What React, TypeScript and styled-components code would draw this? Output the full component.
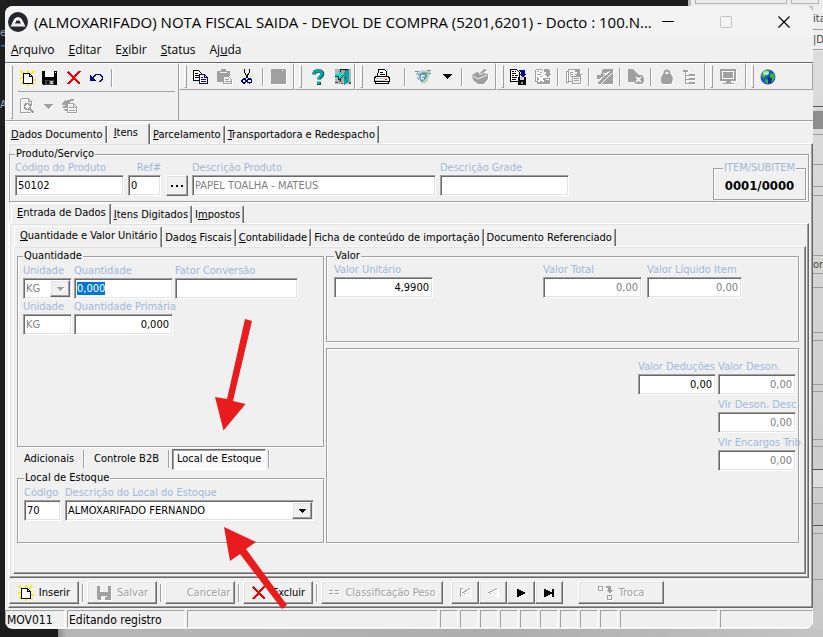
import React, { useEffect, useRef } from "react";
import styled, { createGlobalStyle, css } from "styled-components";

/* ---------- palette and fonts ---------- */

const face = "#f0f0f0";
const shadow = "#a0a0a0";
const dark = "#696969";
const light = "#e3e3e3";
const captionBlue = "#9fb9d9";
const uiFont = '"DejaVu Sans Condensed", "DejaVu Sans", sans-serif';
const systemFont = '"Open Sans", "Noto Sans", sans-serif';

const GlobalStyle = createGlobalStyle`
  *, *::before, *::after { box-sizing: border-box; }
  body { margin: 0; background: #1e1e1e; font: 11px/14px ${uiFont}; color: #000; }
  button, input, select { font: inherit; color: inherit; margin: 0; }
  u { text-underline-offset: 1px; }
`;

const sunken = css`
  border: 1px solid;
  border-color: ${shadow} #fff #fff ${shadow};
  box-shadow: inset 1px 1px 0 ${dark}, inset -1px -1px 0 ${light};
`;

const raised = css`
  border: 1px solid;
  border-color: #fff ${dark} ${dark} #fff;
  box-shadow: inset -1px -1px 0 ${shadow}, inset 1px 1px 0 ${light};
`;

/* ---------- desktop behind the window ---------- */

const Desktop = styled.div`
  position: relative;
  display: grid;
  grid-template: 6px 1fr 8px / 5px minmax(0, 1fr) 10px;
  min-height: 100vh;
  background: #1e1e1e;
  overflow: hidden;
`;

const TopStrip = styled.div`
  grid-column: 1 / -1;
  display: flex;
  justify-content: flex-end;
`;

const TopPeek = styled.div`
  width: 135px;
  background: #ececec;
  border-left: 3px solid #bdbdbd;
  display: flex;
  gap: 4px;
  padding: 0 4px;
`;

const PeekCell = styled.div<{ $grow?: boolean }>`
  flex: ${(p) => (p.$grow ? 1 : "0 0 28px")};
  height: 4px;
  border: 1px solid #b5b5b5;
  border-top: 0;
`;

const LeftStrip = styled.div`
  overflow: hidden;
  display: flex;
  flex-direction: column;
  padding-top: 20px;
`;

const LeftText = styled.span<{ $gap: number; $tone?: string }>`
  margin-top: ${(p) => p.$gap}px;
  color: ${(p) => p.$tone ?? "#9aa3b5"};
`;

const RightStrip = styled.div`
  overflow: hidden;
  display: flex;
  flex-direction: column;
  background: linear-gradient(#efefef, #efefef 44px, #dcdcdc 46px, #cfcfcf 400px, #c8c8c8);
  color: #444;
`;

const RightCell = styled.div<{ $h: number; $bg?: string; $line?: string }>`
  flex: 0 0 ${(p) => p.$h}px;
  overflow: hidden;
  white-space: nowrap;
  display: flex;
  align-items: center;
  background: ${(p) => p.$bg ?? "transparent"};
  border-bottom: 1px solid ${(p) => p.$line ?? "#9b9b9b"};
`;

const BottomStrip = styled.div`
  grid-column: 1 / -1;
  background: linear-gradient(90deg, #1c1c1c 58px, #8a8a8a 58px, #b6b6b6 66px, #adadad 60%, #c4c4c4);
`;

/* ---------- window ---------- */

const Backing = styled.div`
  display: flex;
  flex-direction: column;
  min-width: 0;
  background: linear-gradient(#1e1e1e, #1e1e1e) left / 50% 100% no-repeat, #c4c4c4;
`;

const Window = styled.main`
  flex: 1;
  display: flex;
  flex-direction: column;
  min-width: 0;
  background: ${face};
  border-radius: 8px;
  overflow: hidden;
`;

const TitleBar = styled.header`
  display: flex;
  align-items: center;
  height: 31px;
  padding-left: 3px;
  background: #f3f3f3;
`;

const Title = styled.h1`
  flex: 1;
  min-width: 0;
  margin: 0 0 0 6px;
  font: 400 15px/20px ${systemFont};
  white-space: nowrap;
`;

const CaptionButton = styled.button`
  width: 58px;
  height: 30px;
  border: 0;
  background: none;
  padding: 0;
  display: grid;
  place-items: center;
`;

const MenuBar = styled.nav`
  display: flex;
  align-items: center;
  gap: 14px;
  height: 25px;
  padding-left: 6px;
  font: 12px/16px ${systemFont};
`;

const MenuItem = styled.button`
  border: 0;
  background: none;
  padding: 0;
`;

/* ---------- toolbars ---------- */

const ToolArea = styled.div`
  display: grid;
  grid-template-columns: 174px minmax(0, 1fr);
  height: 60px;
  border-top: 1px solid ${dark};
  border-bottom: 1px solid #fff;
  box-shadow: inset 0 -1px 0 ${shadow};
`;

const Band = styled.div<{ $stretch?: boolean }>`
  display: flex;
  flex: ${(p) => (p.$stretch ? "1 0 auto" : "0 0 auto")};
  align-items: center;
  height: 27px;
  padding: 0 2px 0 4px;
  border: 1px solid;
  border-color: #fff ${shadow} ${shadow} #fff;
`;

const TallBand = styled(Band)`
  height: 58px;
  align-items: stretch;
  padding: 0 3px 0 4px;
`;

const Grip = styled.span`
  width: 3px;
  align-self: stretch;
  margin: 1px 0;
  border: 1px solid;
  border-color: #fff ${shadow} ${shadow} #fff;
`;

const BandRows = styled.div`
  flex: 1;
  display: grid;
  grid-template-rows: 28px 1fr;
  margin-left: 5px;
`;

const ToolRow = styled.div<{ $ruled?: boolean }>`
  display: flex;
  align-items: center;
  ${(p) => p.$ruled && `border-bottom: 1px solid ${shadow};`}
`;

const BandRow = styled.div`
  display: flex;
  min-width: 0;
`;

const ToolButton = styled.button<{ $w?: number }>`
  width: ${(p) => p.$w ?? 24}px;
  height: 22px;
  padding: 0;
  border: 0;
  background: none;
  display: grid;
  place-items: center;
`;

const Rule = styled.span<{ $side?: number }>`
  width: 2px;
  height: 18px;
  margin: 0 ${(p) => p.$side ?? 3}px;
  border-left: 1px solid ${shadow};
  border-right: 1px solid #fff;
`;

const Glyph = styled.svg<{ $off?: boolean }>`
  display: block;
  flex: none;
  ${(p) => p.$off && "filter: drop-shadow(1px 1px 0 #fff);"}
`;

/* ---------- tabs ---------- */

const TabStrip = styled.div<{ $inset: number; $above: number }>`
  display: flex;
  align-items: flex-end;
  height: 20px;
  margin-top: ${(p) => p.$above}px;
  padding-left: ${(p) => p.$inset}px;
`;

const Tab = styled.button<{ $on?: boolean; $wide?: boolean }>`
  position: relative;
  z-index: ${(p) => (p.$on ? 1 : 0)};
  height: ${(p) => (p.$on ? 21 : 18)}px;
  margin-bottom: ${(p) => (p.$on ? -1 : 0)}px;
  padding: ${(p) => (p.$on ? "0 4px 2px 5px" : "0 3px 0 2px")};
  ${(p) => p.$wide && "padding: 0 11px 2px 6px;"}
  white-space: nowrap;
  text-align: left;
  background: ${face};
  border: 1px solid;
  border-color: #fff ${dark} transparent #fff;
  border-bottom: 0;
  border-radius: 2px 2px 0 0;
  box-shadow: inset -1px 0 0 ${shadow};
`;

const Page = styled.section<{ $pad: string; $left?: number }>`
  flex: 1;
  display: flex;
  flex-direction: column;
  min-width: 0;
  margin-left: ${(p) => p.$left ?? 0}px;
  padding: ${(p) => p.$pad};
  border: 1px solid;
  border-color: #fff ${dark} ${dark} #fff;
  box-shadow: inset -1px -1px 0 ${shadow}, inset 1px 1px 0 ${light};
`;

/* ---------- group boxes and fields ---------- */

const Group = styled.fieldset<{ $grow?: boolean; $h?: number; $left?: number }>`
  min-width: 0;
  margin: 0;
  padding: 0 2px 0 ${(p) => p.$left ?? 5}px;
  ${(p) => p.$grow && "flex: 1;"}
  ${(p) => p.$h && `flex: none; min-height: ${p.$h}px;`}
  border: 1px solid ${shadow};
  box-shadow: 1px 1px 0 #fff, inset 1px 1px 0 #fff;
`;

const Legend = styled.legend`
  padding: 0 1px;
  line-height: 14px;
  background: ${face};
`;

const ItemBox = styled.fieldset`
  width: 93px;
  height: 39px;
  margin: 0 0 1px auto;
  padding: 1px 0 0;
  border: 1px solid ${shadow};
  box-shadow: 1px 1px 0 #fff, inset 1px 1px 0 #fff;
  text-align: center;
  font-weight: 700;
  font-size: 13px;
  line-height: 20px;

  legend {
    margin: 0 auto;
    padding: 0 1px;
    font-weight: 400;
    font-size: 11px;
    line-height: 14px;
    color: ${captionBlue};
    background: ${face};
  }
`;

const FieldRow = styled.div<{ $gap?: number; $above?: number; $end?: boolean; $top?: boolean }>`
  display: flex;
  align-items: ${(p) => (p.$top ? "flex-start" : "flex-end")};
  justify-content: ${(p) => (p.$end ? "flex-end" : "flex-start")};
  gap: ${(p) => p.$gap ?? 2}px;
  margin-top: ${(p) => p.$above ?? 0}px;
`;

const FieldBox = styled.label<{ $w: number; $right?: boolean; $push?: boolean; $after?: number }>`
  display: flex;
  flex-direction: column;
  flex: 0 1 ${(p) => p.$w}px;
  min-width: 0;
  color: ${captionBlue};
  white-space: nowrap;
  text-align: ${(p) => (p.$right ? "right" : "left")};
  ${(p) => p.$push && "margin-left: auto;"}
  ${(p) => p.$after && `margin-right: ${p.$after}px;`}
`;

const TextInput = styled.input<{ $numeric?: boolean; $muted?: boolean }>`
  width: 100%;
  height: 21px;
  padding: 0 3px 1px 2px;
  ${sunken}
  border-radius: 0;
  outline: 0;
  background: #fff;
  color: ${(p) => (p.$muted ? "#808080" : "#000")};
  text-align: ${(p) => (p.$numeric ? "right" : "left")};

  &::selection { background: #0078d7; color: #fff; }
`;

const SelectFrame = styled.span`
  display: flex;
  height: 21px;
  padding: 1px;
  background: #fff;
  ${sunken}
`;

const BareSelect = styled.select<{ $muted?: boolean }>`
  appearance: none;
  flex: 1;
  min-width: 0;
  border: 0;
  padding: 0 0 0 1px;
  background: transparent;
  outline: 0;
  opacity: 1;
  color: ${(p) => (p.$muted ? "#808080" : "#000")};
`;

const DropArrow = styled.span`
  flex: 0 0 20px;
  display: grid;
  place-items: center;
  background: ${face};
  ${raised}
`;

const PushButton = styled.button<{ $w: number; $after?: number }>`
  display: flex;
  align-items: center;
  justify-content: center;
  gap: 5px;
  flex: 0 0 ${(p) => p.$w}px;
  height: 23px;
  margin-right: ${(p) => p.$after ?? 0}px;
  padding: 0;
  background: ${face};
  white-space: nowrap;
  ${raised}

  &:disabled { color: ${shadow}; text-shadow: 1px 1px 0 #fff; }
`;

const PickButton = styled.button`
  flex: 0 0 22px;
  height: 21px;
  margin: 14px 0 0 1px;
  padding: 0;
  display: grid;
  place-items: center;
  background: ${face};
  ${raised}
`;

/* ---------- item page ---------- */

const Columns = styled.div`
  flex: 1;
  display: grid;
  grid-template-columns: 307px minmax(0, 1fr);
  gap: 2px;
`;

const Column = styled.div<{ $gap?: number }>`
  display: flex;
  flex-direction: column;
  min-width: 0;
  gap: ${(p) => p.$gap ?? 0}px;
`;

const SubTabs = styled.div`
  display: flex;
  align-items: center;
  height: 24px;
`;

const SubTab = styled.button<{ $on?: boolean }>`
  height: 21px;
  border: 0;
  padding: 0 7px;
  background: none;
  white-space: nowrap;
  ${(p) =>
    p.$on &&
    css`
      padding: 0 4px;
      background: #fafafa;
      border: 1px solid;
      border-color: ${dark} #fff #fff ${dark};
      box-shadow: inset 1px 1px 0 ${shadow};
    `}
`;

const ButtonRow = styled.div`
  display: flex;
  align-items: center;
  height: 29px;
`;

/* ---------- status bar ---------- */

const StatusBar = styled.footer`
  display: flex;
  gap: 2px;
  height: 21px;
  padding: 2px 0 1px;
  font-size: 12px;
`;

const StatusCell = styled.div<{ $w?: number; $grow?: boolean }>`
  flex: ${(p) => (p.$grow ? "1 1 0" : `0 0 ${p.$w}px`)};
  min-width: 0;
  padding-left: 1px;
  line-height: 18px;
  white-space: nowrap;
  border: 1px solid;
  border-color: ${shadow} #fff #fff ${shadow};
`;

const Arrow = styled.svg<{ $x: number; $y: number }>`
  position: absolute;
  left: ${(p) => p.$x}px;
  top: ${(p) => p.$y}px;
  z-index: 5;
  pointer-events: none;
  fill: #e81c1c;
`;

/* ---------- icons ---------- */

type IconProps = { children?: React.ReactNode; off?: boolean; smooth?: boolean; w?: number; h?: number };

const Icon = ({ children, off, smooth, w = 16, h = 16 }: IconProps) => (
  <Glyph
    width={w}
    height={h}
    viewBox={`0 0 ${w} ${h}`}
    fill="none"
    shapeRendering={smooth ? "auto" : "crispEdges"}
    $off={off}
    aria-hidden="true"
  >
    {children}
  </Glyph>
);

const LogoIcon = () => (
  <Icon w={20} h={20} smooth>
    <circle cx="10" cy="10" r="10" fill="#26262e" />
    <path d="M2.500 14.500L6 7.500Q7.300 5 10 5t4 2.500l3.500 7z" fill="#fff" />
    <path d="M7 11.500L8.500 8.500h3L13 11.500z" fill="#26262e" />
    <path d="M1 12.500h18v1H1z" fill="#26262e" opacity=".2" />
  </Icon>
);

const NewIcon = () => (
  <Icon>
    <path d="M1 1l3 3M7.500 0v3M14 1l-3 3M0 8h4M1 14l3-3M13 9.500h3M14.500 15l-2-2M8 16v-2" stroke="#ffee00" strokeWidth="2" />
    <path d="M3.500 3.500h6l3 3v7h-9z" fill="#fff" stroke="#000" />
    <path d="M9.500 3.500v3h3" stroke="#000" />
  </Icon>
);

const SaveIcon = () => (
  <Icon>
    <path d="M0 1h15v14H1l-1-1z" fill="#000" />
    <path d="M3 1h9v6H3z" fill="#fff" />
    <path d="M13 2h1v1h-1z" fill="#fff" />
    <path d="M3 10h9v5H3z" fill="#444" />
    <path d="M5 11h2v3H5z" fill="#000" />
    <path d="M8 11h3v3H8z" fill="#bbb" />
  </Icon>
);

const SaveOffIcon = () => (
  <Icon off>
    <path d="M1 1h3v6h8V1h3v14H2l-1-1z" fill={shadow} />
    <path d="M5 11h6v4H5z" fill={face} />
    <path d="M9 12h2v3H9z" fill={shadow} />
  </Icon>
);

const CrossIcon = () => (
  <Icon>
    <path d="M2 2l12 12M14 1L2 14" stroke="#f00000" strokeWidth="2" />
  </Icon>
);

const UndoIcon = () => (
  <Icon>
    <path d="M1 5v6h6z" fill="#000080" />
    <path d="M3 8.500L6 5.500l1-1h4l2 2v3l-2 2h-1" stroke="#000080" />
  </Icon>
);

const PreviewIcon = () => (
  <Icon off>
    <path d="M1.500 .5h8l3 3v4M1.500 .5v14h10M9.500 .5v3h3" stroke={shadow} />
    <circle cx="8.500" cy="8.500" r="3" stroke={shadow} strokeWidth="1.500" />
    <path d="M10 10l5 5" stroke={shadow} strokeWidth="2" />
  </Icon>
);

const TriangleIcon = ({ off }: { off?: boolean }) => (
  <Icon w={9} h={5} off={off}>
    <path d="M0 0h9v1H8v1H7v1H6v1H5v1H4V4H3V3H2V2H1V1H0z" fill={off ? shadow : "#000"} />
  </Icon>
);

const SmallTriangle = ({ off }: { off?: boolean }) => (
  <Icon w={7} h={4} off={off}>
    <path d="M0 0h7v1H6v1H5v1H4v1H3V3H2V2H1V1H0z" fill={off ? shadow : "#000"} />
  </Icon>
);

const RefreshPageIcon = () => (
  <Icon off>
    <path d="M5.500 5.500h6l3 3v6h-9z" stroke={shadow} />
    <path d="M7 9h5v1H7zM7 12h6v1H7zM11 6h1v3h3v1h-4z" fill={shadow} />
    <path d="M0 6l4-5v2l5-2v3L5 6l1 2-6-1zM1 8h4v2H1zM8 1h4v2H8zM2 11h3v2H3z" fill={shadow} />
  </Icon>
);

const CopyIcon = () => (
  <Icon>
    <path d="M.5 1.500h5l3 3v7h-8z" fill="#fff" stroke="#000" />
    <path d="M2 4h3v1H2zM2 6h4v1H2zM2 8h4v1H2z" fill="#000" />
    <path d="M6.500 5.500h5l3 3v6h-8z" fill="#fff" stroke="#000080" />
    <path d="M11.500 5.500v3h3M8 8.500h2M8 10.500h5M8 12.500h5" stroke="#000080" />
  </Icon>
);

const PasteIcon = () => (
  <Icon off>
    <path d="M0 2h4V0h5v2h4v5H6v6H0z" fill={shadow} />
    <path d="M3 3h7v1H3z" fill={face} />
    <path d="M6.500 7.500h5l3 3v4h-8z" fill={face} stroke={shadow} />
    <path d="M8 10h4v1H8zM8 12h6v1H8z" fill={shadow} />
  </Icon>
);

const CutIcon = () => (
  <Icon>
    <path d="M5.500 0v3l4 7M10.500 0v3l-4 7" stroke="#000" />
    <path d="M7 6h2v3H7z" fill="#000" />
    <circle cx="5" cy="12" r="2" stroke="#000080" strokeWidth="1.300" />
    <circle cx="10.500" cy="12" r="2" stroke="#000080" strokeWidth="1.300" />
  </Icon>
);

const BlockIcon = () => (
  <Icon off>
    <path d="M0 0h15v15H0z" fill={shadow} />
    <path d="M11 1h1v1h-1z" fill="#fff" />
  </Icon>
);

const HelpIcon = () => (
  <Icon smooth>
    <path d="M4 5.500C4 2.500 6 2 8.200 2c2.600 0 4.300 1.200 4.300 3.200 0 2.600-3.500 2.800-3.500 5.300" stroke="#004d55" strokeWidth="3.500" />
    <path d="M3.500 5C4 2.500 6 1.800 8 1.800c2.300 0 4 1 4 3 0 2.500-3.500 2.700-3.500 5.200" stroke="#00a8b0" strokeWidth="2.500" />
    <path d="M7 13h4v3H7z" fill="#004d55" />
    <path d="M7 12.500h3V15H7z" fill="#00a8b0" />
  </Icon>
);

const ExitIcon = () => (
  <Icon>
    <path d="M0 0h16v15H0z" fill="#b4b4b4" />
    <path d="M5 0h9v12H5z" fill="#1c1c1c" />
    <path d="M6 1h4v11H6z" fill="#a8a8a8" />
    <path d="M9 3l5-3v13l-5 3z" fill="#0aa0a0" />
    <path d="M10 8h1v2h-1z" fill="#002b2b" />
    <path d="M0 5h4V2l5 4-5 4V7H0z" fill="#00dede" />
    <path d="M0 7h4v3l5-4v1l-5 4H3V8H0z" fill="#003a3a" />
    <path d="M0 13h3v1H0zM4 12h2v1H4zM6 14h2v1H6zM14 13h2v2h-2z" fill="#555" />
  </Icon>
);

const PrinterIcon = () => (
  <Icon w={18}>
    <path d="M4.500 7.500l1-7h6l2 2v5z" fill="#fff" stroke="#000" />
    <path d="M7 3h3v1H7zM7 5h5v1H7z" fill="#000" />
    <path d="M1.500 8.500l2-1h11l2 1v4h-15z" fill="#fff" stroke="#000" />
    <path d="M2 9h14v1H2zM2 11h10v1H2z" fill="#ccc" />
    <path d="M12 10h2v1h-2z" fill="#e00" />
    <path d="M2.500 12.500h13v2h-13z" fill="#fff" stroke="#000" />
  </Icon>
);

const MapIcon = () => (
  <Icon smooth>
    <path d="M2 3l6-2 7 1-1 7-3 5-4 1-3-5z" fill="#b7d7cf" />
    <path d="M4 6c3-4 7-3 8-1s-2 7-6 8z" fill="#5b93b8" />
    <path d="M6 6h4v1.500H7.500V9H9v1.500H6z" fill="#e8f1ee" />
    <path d="M8 3l6 1-3 2z" fill="#74a85d" />
    <path d="M0 2.500h4M1 5h3M12 1.500h4M14 4.500h2M2 8l2 3" stroke="#6f8f99" />
    <path d="M10 11l3 1-3 2z" fill="#c5cf9a" />
  </Icon>
);

const CrateIcon = () => (
  <Icon w={18} off smooth>
    <path d="M1 6l5-3 3 1 4-4 3 1-4 3 5 1v5l-4 5H7l-5-4z" fill={shadow} />
    <path d="M2 7l5 3 9-4M8 4l2 1.500L12 4" stroke={face} />
  </Icon>
);

const SaveDocIcon = () => (
  <Icon w={18}>
    <path d="M1.500 .5h6l3 3v9h-9z" fill="#fff" stroke="#000" />
    <path d="M3 2h2v1H3zM6 2h1v1H6zM3 4h4v1H3zM3 6h2v1H3zM6 6h3v1H6zM3 8h5v1H3zM3 10h4v1H3z" fill="#000" />
    <path d="M10 1h5l1 1v3h1l-3 4-4-4h2V4l-2-2z" fill="#000090" />
    <path d="M9 8h8v8H9z" fill="#000" />
    <path d="M11 8h4v3h-4z" fill="#ccc" />
    <path d="M12 13h2v2h-2z" fill="#999" />
  </Icon>
);

const DocCrossIcon = () => (
  <Icon w={18} off>
    <path d="M1.500 .5h6l2 2M1.500 .5v12h3" stroke={shadow} />
    <path d="M3 2h2v1H3zM6 3h2v1H6zM3 5h4v1H3z" fill={shadow} />
    <path d="M10 0h4l2 2v3h1l-3 4-4-4h2V3h-2z" fill={shadow} />
    <path d="M3 7h6v2h7v6H3z" fill={shadow} />
    <path d="M4 7l6 6M10 7l-6 6" stroke="#fff" strokeWidth="1.500" />
    <path d="M12 10h3v1h-3z" fill="#fff" />
  </Icon>
);

const DocsIcon = () => (
  <Icon w={18} off>
    <path d="M1.500 2.500h2v11h-2zM3.500 .5h7l2 2v10h-9z" stroke={shadow} />
    <path d="M5 3h3v1H5zM5 5h3v1H5zM5 7h3v1H5z" fill={shadow} />
    <path d="M10 0h4l1 1v4h2l-4 4-3-4h2V3h-2z" fill={shadow} />
    <path d="M7.500 7.500h8v7h-8z" fill={face} stroke={shadow} />
    <path d="M9 9h5v1H9zM9 11h5v1H9z" fill={shadow} />
  </Icon>
);

const SplitIcon = () => (
  <Icon off>
    <path d="M6 0h10v15H1v-2l5-5-2 2H0V6h4z" fill={shadow} />
    <path d="M1 12L13 2M6 4h4M4 15L15 4" stroke="#fff" />
  </Icon>
);

const FolderCrossIcon = () => (
  <Icon w={18} off smooth>
    <path d="M1 0h5l6 6h3l2 3v4l-2 2H9l-2-2H1z" fill={shadow} />
    <path d="M9 8l5 5M14 8l-5 5" stroke="#fff" strokeWidth="1.500" />
  </Icon>
);

const LockIcon = () => (
  <Icon off smooth>
    <path d="M5.500 7V4a2.500 2.500 0 015 0v3" stroke={shadow} strokeWidth="2" />
    <path d="M4 5h8l2 4-1 5-1 1H4l-2-2V9z" fill={shadow} />
  </Icon>
);

const TreeIcon = () => (
  <Icon off>
    <path d="M1 1h5v2H1z" fill={shadow} />
    <path d="M3.500 3v12M4 6.500h3M4 10.500h3M4 14.500h3" stroke={shadow} />
    <path d="M7 5h6v2H7zM7 9h6v2H7zM7 13h6v2H7z" fill={shadow} />
  </Icon>
);

const MonitorIcon = () => (
  <Icon off>
    <path d="M0 0h16v12H0z" fill={shadow} />
    <path d="M2.500 2.500h11v7h-11z" stroke="#fff" />
    <path d="M6 12h5v2h3v1H3v-1h3z" fill={shadow} />
  </Icon>
);

const GlobeIcon = () => (
  <Icon smooth>
    <circle cx="8" cy="8" r="7.500" fill="#1559c4" />
    <path d="M3 3c3-3 6-3 7-1L8 5 6 7 4 9 1 7zM10 5l4-1 1 5-3 4-2-3zM5 10l3 1v4l-3-2z" fill="#3fae3b" />
    <path d="M8 8l4 1-1 5-3 1z" fill="#0b2f86" />
    <ellipse cx="6" cy="4" rx="3" ry="2" fill="#d8f5ff" opacity=".75" />
  </Icon>
);

const ListIcon = () => (
  <Icon w={12} h={8} off>
    <path d="M1 1h4v1H1zM7 1h4v1H7zM1 4h4v1H1zM7 4h4v1H7z" fill={shadow} />
  </Icon>
);

const SwapIcon = () => (
  <Icon off>
    <path d="M.5 1.500h4v4h-4zM9.500 10.500h4v4h-4z" stroke={shadow} />
    <path d="M8 1h5v4h2l-3 4-4-4h2V3H8z" fill={shadow} />
  </Icon>
);

const FirstIcon = () => (
  <Icon w={12} h={9} off>
    <path d="M4 .5H1.500V9M11 .5L4 4.500l2 1" stroke={shadow} />
    <path d="M6 6l5 2.500V1" stroke="#fff" />
  </Icon>
);

const PriorIcon = () => (
  <Icon w={12} h={9} off>
    <path d="M10 .5L2 4.500l2 1" stroke={shadow} />
    <path d="M4 6l6 2.500V1" stroke="#fff" />
  </Icon>
);

const NextIcon = () => (
  <Icon w={8} h={8}>
    <path d="M0 0h2v1h2v1h2v1h2v2H6v1H4v1H2v1H0z" fill="#000" />
  </Icon>
);

const LastIcon = () => (
  <Icon w={11} h={8}>
    <path d="M0 0h2v1h2v1h2v1h2v2H6v1H4v1H2v1H0zM8 0h2v8H8z" fill="#000" />
  </Icon>
);

/* ---------- small helpers ---------- */

/** Renders a caption in which "&" marks the letter to underline. */
const Caption = ({ text }: { text: string }) => {
  const at = text.indexOf("&");
  if (at < 0) return <>{text}</>;
  return (
    <>
      {text.slice(0, at)}
      <u>{text[at + 1]}</u>
      {text.slice(at + 2)}
    </>
  );
};

type TabsProps = { items: string[]; active: number; inset: number; above: number; wide?: boolean };

const Tabs = ({ items, active, inset, above, wide }: TabsProps) => (
  <TabStrip role="tablist" $inset={inset} $above={above}>
    {items.map((text, i) => (
      <Tab key={text} role="tab" type="button" aria-selected={i === active} $on={i === active} $wide={wide && i === active}>
        <Caption text={text} />
      </Tab>
    ))}
  </TabStrip>
);

type FieldProps = {
  label: string;
  w: number;
  value?: string;
  numeric?: boolean;
  muted?: boolean;
  right?: boolean;
  push?: boolean;
  after?: number;
  selected?: boolean;
};

const Field = ({ label, w, value = "", numeric, muted, right, push, after, selected }: FieldProps) => {
  const input = useRef<HTMLInputElement>(null);
  useEffect(() => {
    if (!selected || !input.current) return;
    input.current.focus();
    input.current.select();
  }, [selected]);
  return (
    <FieldBox $w={w} $right={right} $push={push} $after={after}>
      {label}
      <TextInput ref={input} defaultValue={value} readOnly={muted} $numeric={numeric} $muted={muted} />
    </FieldBox>
  );
};

const Tool = ({ name, w, off, children }: { name: string; w?: number; off?: boolean; children: React.ReactNode }) => (
  <ToolButton type="button" aria-label={name} disabled={off} $w={w}>
    {children}
  </ToolButton>
);

const menus = ["&Arquivo", "&Editar", "E&xibir", "&Status", "Aj&uda"];

const rightCells: { h: number; text?: string; bg?: string; line?: string }[] = [
  { h: 6, line: "#efefef" },
  { h: 15, text: "ita", line: "#efefef" },
  { h: 3 },
  { h: 20, text: "|D" },
  { h: 57, line: "#555" },
  { h: 4, line: "#cfcfcf" },
  { h: 18, bg: "#8e8e8e", line: "#8e8e8e" },
  { h: 6 },
  { h: 30 },
  { h: 22 },
  { h: 9 },
  { h: 60 },
  { h: 18, text: "om" },
  { h: 14 },
  { h: 45 },
  { h: 8 },
  { h: 44 },
  { h: 7 },
  { h: 48 },
  { h: 7 },
  { h: 23, line: "#555" },
  { h: 18, bg: "#dedede" },
  { h: 16 },
  { h: 22, bg: "#c6c6c6", line: "#555" },
  { h: 8 },
  { h: 46 },
];

/* ---------- page ---------- */

export default function App() {
  return (
    <Desktop>
      <GlobalStyle />
      <TopStrip aria-hidden="true">
        <TopPeek>
          <PeekCell $grow />
          <PeekCell />
        </TopPeek>
      </TopStrip>

      <LeftStrip aria-hidden="true">
        <LeftText $gap={0}>e</LeftText>
        <LeftText $gap={0} $tone="#3f86d8">~</LeftText>
        <LeftText $gap={44}>A</LeftText>
      </LeftStrip>

      <Backing>
        <Window>
          <TitleBar>
            <LogoIcon />
            <Title>(ALMOXARIFADO) NOTA FISCAL SAIDA - DEVOL DE COMPRA (5201,6201) - Docto : 100.N...</Title>
            <CaptionButton type="button" aria-label="Minimizar">
              <Icon w={12} h={12}><path d="M0 5.500h12" stroke="#000" /></Icon>
            </CaptionButton>
            <CaptionButton type="button" aria-label="Maximizar" disabled>
              <Icon w={12} h={12} smooth><rect x=".5" y=".5" width="11" height="11" rx="1" stroke="#c4c4c4" /></Icon>
            </CaptionButton>
            <CaptionButton type="button" aria-label="Fechar">
              <Icon w={12} h={12} smooth><path d="M.5 .5l11 11M11.500 .5l-11 11" stroke="#000" strokeWidth="1.200" /></Icon>
            </CaptionButton>
          </TitleBar>

          <MenuBar>
            {menus.map((m) => (
              <MenuItem key={m} type="button"><Caption text={m} /></MenuItem>
            ))}
          </MenuBar>

          <ToolArea>
            <TallBand>
              <Grip />
              <BandRows>
                <ToolRow $ruled>
                  <Tool name="Novo" w={20}><NewIcon /></Tool>
                  <Tool name="Salvar"><SaveIcon /></Tool>
                  <Tool name="Excluir"><CrossIcon /></Tool>
                  <Tool name="Desfazer" w={22}><UndoIcon /></Tool>
                  <Rule />
                </ToolRow>
                <ToolRow>
                  <Tool name="Visualizar" w={18} off><PreviewIcon /></Tool>
                  <Tool name="Opções de visualização" off><TriangleIcon off /></Tool>
                  <Tool name="Atualizar" w={20} off><RefreshPageIcon /></Tool>
                </ToolRow>
              </BandRows>
            </TallBand>
            <BandRow>
              <Band>
                <Grip />
                <Tool name="Copiar" w={28}><CopyIcon /></Tool>
                <Tool name="Colar" w={20} off><PasteIcon /></Tool>
                <Tool name="Recortar"><CutIcon /></Tool>
                <Rule />
                <Tool name="Bloco" off><BlockIcon /></Tool>
              </Band>
              <Band>
                <Grip />
                <Tool name="Ajuda" w={32}><HelpIcon /></Tool>
                <Tool name="Sair" w={18}><ExitIcon /></Tool>
              </Band>
              <Band>
                <Grip />
                <Tool name="Imprimir" w={38}><PrinterIcon /></Tool>
                <Rule />
                <Tool name="Mapa" w={28}><MapIcon /></Tool>
                <Tool name="Opções do mapa" w={20}><TriangleIcon /></Tool>
                <Rule $side={4} />
                <Tool name="Embalagem" w={26} off><CrateIcon /></Tool>
              </Band>
              <Band>
                <Grip />
                <Tool name="Gravar documento" w={28}><SaveDocIcon /></Tool>
                <Tool name="Cancelar documento" w={22} off><DocCrossIcon /></Tool>
                <Rule />
                <Tool name="Copiar documentos" w={23} off><DocsIcon /></Tool>
                <Rule />
                <Tool name="Dividir" w={23} off><SplitIcon /></Tool>
                <Rule />
                <Tool name="Fechar pasta" w={23} off><FolderCrossIcon /></Tool>
                <Rule />
                <Tool name="Bloquear" w={23} off><LockIcon /></Tool>
                <Tool name="Estrutura" off><TreeIcon /></Tool>
              </Band>
              <Band>
                <Grip />
                <Tool name="Monitor" w={30} off><MonitorIcon /></Tool>
              </Band>
              <Band $stretch>
                <Grip />
                <Tool name="Internet" w={28}><GlobeIcon /></Tool>
              </Band>
            </BandRow>
          </ToolArea>

          <Tabs items={["&Dados Documento", "&Itens", "&Parcelamento", "&Transportadora e Redespacho"]} active={1} inset={3} above={1} wide />
          <Page $left={3} $pad="3px 3px 0 0">
            <Group>
              <Legend>Produto/Serviço</Legend>
              <FieldRow $gap={4} $top>
                <Field label="Código do Produto" w={109} value="50102" />
                <Field label="Ref#" w={33} value="0" right />
                <PickButton type="button" aria-label="Pesquisar produto">
                  <Icon w={12} h={2}><path d="M0 0h2v2H0zM5 0h2v2H5zM10 0h2v2h-2z" fill="#000" /></Icon>
                </PickButton>
                <Field label="Descrição Produto" w={244} value="PAPEL TOALHA - MATEUS" muted />
                <Field label="Descrição Grade" w={129} />
                <ItemBox>
                  <legend>ITEM/SUBITEM</legend>
                  0001/0000
                </ItemBox>
              </FieldRow>
            </Group>

            <Tabs items={["&Entrada de Dados", "&Itens Digitados", "I&mpostos"]} active={0} inset={2} above={1} />
            <Page $pad="2px 2px 3px 3px">
              <Tabs items={["&Quantidade e Valor Unitário", "Dado&s Fiscais", "&Contabilidade", "Ficha de conteúdo de importação", "Documento Referenciado"]} active={0} inset={1} above={0} />
              <Page $pad="2px 6px 30px 3px">
                <Columns>
                  <Column>
                    <Group $grow>
                      <Legend>Quantidade</Legend>
                      <FieldRow $above={1}>
                        <FieldBox $w={49}>
                          Unidade
                          <SelectFrame>
                            <BareSelect disabled $muted defaultValue="KG"><option>KG</option></BareSelect>
                            <DropArrow><SmallTriangle off /></DropArrow>
                          </SelectFrame>
                        </FieldBox>
                        <Field label="Quantidade" w={99} value="0,000" selected />
                        <Field label="Fator Conversão" w={123} />
                      </FieldRow>
                      <FieldRow $above={1}>
                        <Field label="Unidade" w={49} value="KG" muted />
                        <Field label="Quantidade Primária" w={99} value="0,000" numeric />
                      </FieldRow>
                    </Group>
                    <SubTabs role="tablist">
                      <SubTab type="button" role="tab">Adicionais</SubTab>
                      <Rule $side={2} />
                      <SubTab type="button" role="tab">Controle B2B</SubTab>
                      <Rule $side={2} />
                      <SubTab type="button" role="tab" aria-selected $on>Local de Estoque</SubTab>
                      <Rule $side={2} />
                    </SubTabs>
                    <Group $h={72} $left={6}>
                      <Legend>Local de Estoque</Legend>
                      <FieldRow $gap={4} $above={1}>
                        <Field label="Código" w={37} value="70" />
                        <FieldBox $w={249}>
                          Descrição do Local do Estoque
                          <SelectFrame>
                            <BareSelect defaultValue="ALMOXARIFADO FERNANDO"><option>ALMOXARIFADO FERNANDO</option></BareSelect>
                            <DropArrow><SmallTriangle /></DropArrow>
                          </SelectFrame>
                        </FieldBox>
                      </FieldRow>
                    </Group>
                  </Column>
                  <Column $gap={6}>
                    <Group $h={93} $left={7}>
                      <Legend>Valor</Legend>
                      <FieldRow $gap={5}>
                        <Field label="Valor Unitário" w={99} value="4,9900" numeric />
                        <Field label="Valor Total" w={99} value="0,00" numeric muted push />
                        <Field label="Valor Líquido Item" w={95} value="0,00" numeric muted after={54} />
                      </FieldRow>
                    </Group>
                    <Group $grow>
                      <FieldRow $end $above={11}>
                        <Field label="Valor Deduções" w={78} value="0,00" numeric />
                        <Field label="Valor Deson." w={78} value="0,00" numeric muted />
                      </FieldRow>
                      <FieldRow $end $above={3}>
                        <Field label="Vlr Deson. Desc." w={78} value="0,00" numeric muted />
                      </FieldRow>
                      <FieldRow $end $above={3}>
                        <Field label="Vlr Encargos Trib" w={78} value="0,00" numeric muted />
                      </FieldRow>
                    </Group>
                  </Column>
                </Columns>
              </Page>
            </Page>

            <ButtonRow>
              <PushButton type="button" $w={70}><NewIcon />Inserir</PushButton>
              <Rule />
              <PushButton type="button" disabled $w={70}><SaveOffIcon />Salvar</PushButton>
              <Rule />
              <PushButton type="button" disabled $w={70}><Icon w={12} />Cancelar</PushButton>
              <Rule />
              <PushButton type="button" $w={70}><CrossIcon />Excluir</PushButton>
              <Rule />
              <PushButton type="button" disabled $w={122} $after={8}><ListIcon />Classificação Peso</PushButton>
              <PushButton type="button" disabled $w={28} aria-label="Primeiro"><FirstIcon /></PushButton>
              <PushButton type="button" disabled $w={28} aria-label="Anterior"><PriorIcon /></PushButton>
              <PushButton type="button" $w={28} aria-label="Próximo"><NextIcon /></PushButton>
              <PushButton type="button" $w={28} $after={15} aria-label="Último"><LastIcon /></PushButton>
              <PushButton type="button" disabled $w={86}><SwapIcon />Troca</PushButton>
            </ButtonRow>
          </Page>

          <StatusBar>
            <StatusCell $w={60}>MOV011</StatusCell>
            <StatusCell $w={118}>Editando registro</StatusCell>
            <StatusCell $w={251} />
            {Array.from({ length: 9 }, (_, i) => (
              <StatusCell key={i} $w={18} />
            ))}
            <StatusCell $w={98} />
            <StatusCell $grow />
          </StatusBar>
        </Window>
      </Backing>

      <RightStrip aria-hidden="true">
        {rightCells.map((c, i) => (
          <RightCell key={i} $h={c.h} $bg={c.bg} $line={c.line}>{c.text}</RightCell>
        ))}
      </RightStrip>
      <BottomStrip aria-hidden="true" />

      <Arrow $x={214} $y={318} width="40" height="114" viewBox="0 0 40 114" aria-hidden="true">
        <path d="M31 1L38 3 19 83 31.500 86 9.500 112.500 1 79 13 81z" />
      </Arrow>
      <Arrow $x={223} $y={526} width="66" height="86" viewBox="0 0 66 86" aria-hidden="true">
        <path d="M1 1L33 16 23 23 64 79 59 83 17 28 7 35z" />
      </Arrow>
    </Desktop>
  );
}
